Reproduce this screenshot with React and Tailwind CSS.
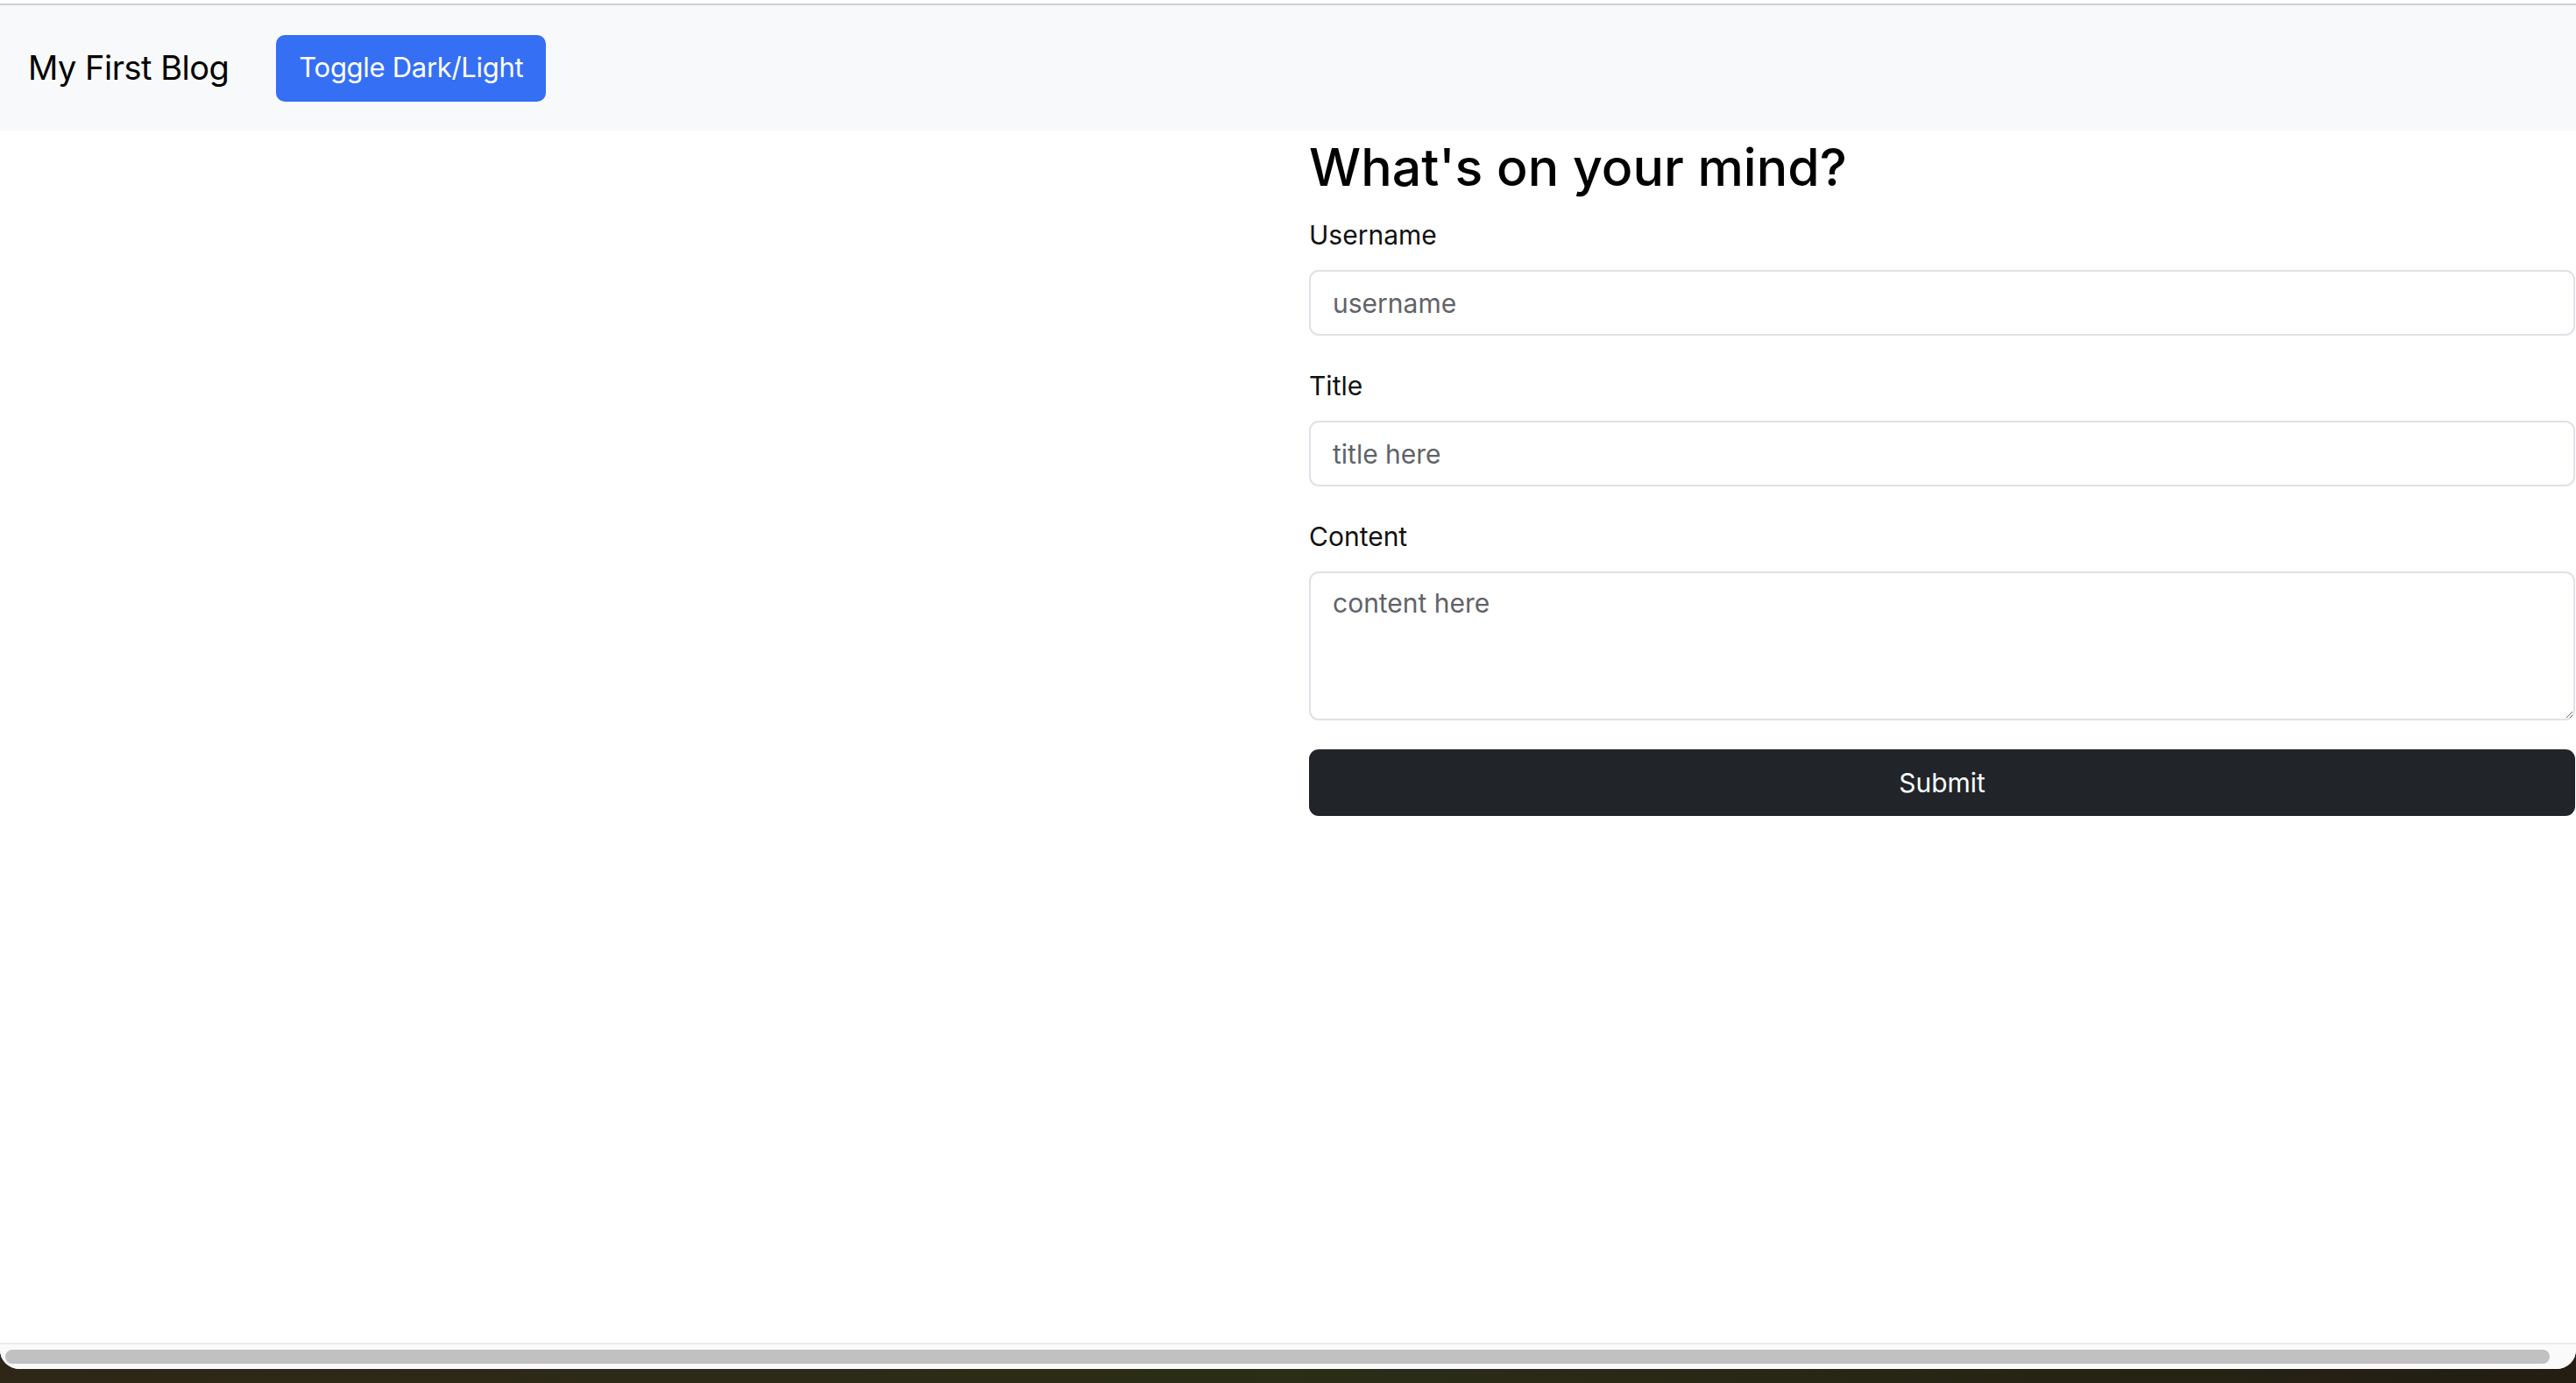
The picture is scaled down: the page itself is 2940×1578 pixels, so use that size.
import React from 'react';

const FONT = { fontFamily: 'Inter, "Noto Sans", sans-serif' };

function Field({ label, placeholder }) {
  return (
    <div className="mb-[35px]">
      <label className="block text-[30px] leading-[45px] text-[#111] mb-[17px]">{label}</label>
      <input
        type="text"
        placeholder={placeholder}
        className="block w-full h-[75px] px-[25px] text-[30px] text-[#212529] bg-white border-2 border-[#dee2e6] rounded-[11px] outline-none placeholder:text-[#5f6368]"
      />
    </div>
  );
}

function App() {
  return (
    <div
      className="w-[2940px] h-[1578px] overflow-hidden bg-gradient-to-r from-[#2e2616] via-[#2b2d17] to-[#231d12]"
      style={FONT}
    >
      <div className="h-[1562px] bg-white rounded-b-[22px] flex flex-col overflow-hidden">
        {/* window top edge */}
        <div className="h-[6px] bg-white border-b-2 border-[#cfcfd2]" />

        {/* Navbar */}
        <nav className="h-[143px] bg-[#f8f9fa] flex items-center pl-[32px]">
          <span className="text-[38px] tracking-[-0.5px] text-black mr-[54px] whitespace-nowrap">My First Blog</span>
          <button className="w-[308px] h-[76px] rounded-[10px] bg-[#356ff3] text-white text-[31px] tracking-[-0.3px] whitespace-nowrap">
            Toggle Dark/Light
          </button>
        </nav>

        {/* Main */}
        <main className="flex-1 flex">
          <div className="w-[1494px] shrink-0" />
          <div className="w-[1445px] shrink-0">
            <h1 className="text-[59px] leading-[72px] font-medium text-black mt-[6px] mb-[19px]">
              What's on your mind?
            </h1>
            <Field label="Username" placeholder="username" />
            <Field label="Title" placeholder="title here" />
            <div className="mb-[33px]">
              <label className="block text-[30px] leading-[45px] text-[#111] mb-[17px]">Content</label>
              <textarea
                placeholder="content here"
                className="block w-full h-[170px] px-[25px] py-[12px] text-[30px] leading-[45px] bg-white border-2 border-[#dee2e6] rounded-[11px] outline-none placeholder:text-[#5f6368]"
              />
            </div>
            <button className="w-full h-[76px] rounded-[11px] bg-[#212529] text-white text-[30px]">
              Submit
            </button>
          </div>
        </main>

        {/* Horizontal scrollbar */}
        <div className="h-[30px] border-t-2 border-[#ebebeb] bg-[#fafafa] pl-[6px] pt-[6px]">
          <div className="w-[2904px] h-[16px] rounded-full bg-[#c1c1c1]" />
        </div>
      </div>
    </div>
  );
}

export default App;
